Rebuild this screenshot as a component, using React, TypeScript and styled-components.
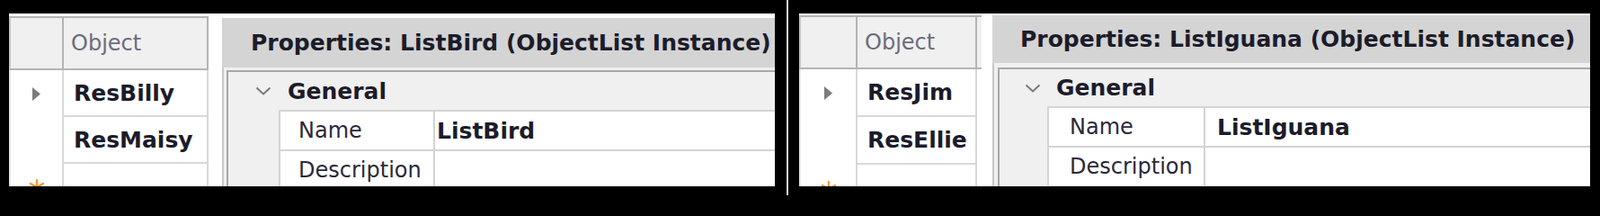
import styled, { createGlobalStyle } from 'styled-components';

const GlobalStyle = createGlobalStyle`
    html, body {
        margin: 0;
        padding: 0;
        background: #000;
    }
    * {
        box-sizing: border-box;
    }
`;

interface ShotData {
    width: number
    gridTop: number
    panelTop: number
    ind: number
    obj: number
    extra: number
    gap: number
    headH: number
    rowH: number
    rows: string[]
    title: string
    titleH: number
    titlePad: number
    bodyPadTop: number
    bodyPadLeft: number
    catH: number
    chevPad: number
    chevGap: number
    gutter: number
    nameCol: number
    namePad: number
    valuePad: number
    propH: number
    value: string
}

const shots: ShotData[] = [
    {
        width: 852, gridTop: 3, panelTop: 5,
        ind: 59, obj: 161, extra: 0, gap: 15,
        headH: 60, rowH: 52, rows: ['ResBilly', 'ResMaisy'],
        title: 'Properties: ListBird (ObjectList Instance)',
        titleH: 55, titlePad: 32, bodyPadTop: 3, bodyPadLeft: 3,
        catH: 42, chevPad: 30, chevGap: 18,
        gutter: 56, nameCol: 172, namePad: 20, valuePad: 2, propH: 44,
        value: 'ListBird',
    },
    {
        width: 880, gridTop: 2, panelTop: 2,
        ind: 63, obj: 133, extra: 5, gap: 12,
        headH: 60, rowH: 53, rows: ['ResJim', 'ResEllie'],
        title: 'Properties: ListIguana (ObjectList Instance)',
        titleH: 53, titlePad: 31, bodyPadTop: 5, bodyPadLeft: 4,
        catH: 41, chevPad: 28, chevGap: 17,
        gutter: 53, nameCol: 174, namePad: 23, valuePad: 13, propH: 44,
        value: 'ListIguana',
    },
];

const RowArrow = () => (
    <svg width="9" height="15" viewBox="0 0 9 15">
        <polygon points="0,0 9,7.5 0,15" fill="#7c7c7c" />
    </svg>
);

const NewRowStar = () => (
    <svg width="18" height="18" viewBox="0 0 18 18">
        <g stroke="#f39a3c" strokeWidth="2.4" strokeLinecap="round">
            <line x1="9" y1="1" x2="9" y2="17" />
            <line x1="2" y1="5" x2="16" y2="13" />
            <line x1="2" y1="13" x2="16" y2="5" />
        </g>
    </svg>
);

const Chevron = () => (
    <svg width="18" height="10" viewBox="0 0 18 10">
        <polyline points="1.5,1.5 9,8.5 16.5,1.5" fill="none" stroke="#7a7a7a" strokeWidth="2" />
    </svg>
);

const ObjectGrid = ({ s }: { s: ShotData }) => (
    <Grid $top={s.gridTop} $gap={s.gap}>
        <HeadRow $cols={`${s.ind}px ${s.obj}px ${s.extra}px`} $h={s.headH}>
            <HeadCell />
            <HeadCell>Object</HeadCell>
            <span />
        </HeadRow>
        {[...s.rows, ''].map((name, i) => (
            <BodyRow key={i} $cols={`${s.ind}px ${s.obj}px`} $h={s.rowH}>
                <IndCell>
                    {i === 0 && <RowArrow />}
                    {i === s.rows.length && <NewRowStar />}
                </IndCell>
                <ItemCell>{name}</ItemCell>
            </BodyRow>
        ))}
    </Grid>
);

const PropertyPanel = ({ s }: { s: ShotData }) => (
    <Panel $top={s.panelTop}>
        <TitleBar $h={s.titleH} $pad={s.titlePad}>{s.title}</TitleBar>
        <PanelBody $padTop={s.bodyPadTop} $padLeft={s.bodyPadLeft}>
            <Frame>
                <Category $h={s.catH} $pad={s.chevPad} $gap={s.chevGap}>
                    <Chevron />
                    <span>General</span>
                </Category>
                {[['Name', s.value], ['Description', '']].map(([label, val]) => (
                    <PropRow key={label} $cols={`${s.gutter}px ${s.nameCol}px 1fr`} $h={s.propH}>
                        <span />
                        <PropName $pad={s.namePad}>{label}</PropName>
                        <PropValue $pad={s.valuePad}>{val}</PropValue>
                    </PropRow>
                ))}
            </Frame>
        </PanelBody>
    </Panel>
);

export default function App() {
    return (
        <>
            <GlobalStyle />
            <Page>
                <Shot $w={shots[0].width}>
                    <ObjectGrid s={shots[0]} />
                    <PropertyPanel s={shots[0]} />
                </Shot>
                <Divider />
                <Shot $w={shots[1].width}>
                    <ObjectGrid s={shots[1]} />
                    <PropertyPanel s={shots[1]} />
                </Shot>
            </Page>
        </>
    );
}

const Page = styled.div`
    display: flex;
    height: 217px;
    width: 1780px;
    padding-left: 10px;
    background: #000;
    font-family: "DejaVu Sans", Verdana, sans-serif;
    color: #1c1c2a;
    overflow: hidden;
`;

const Shot = styled.div<{ $w: number }>`
    width: ${({ $w }) => $w}px;
    flex-shrink: 0;
    margin: 15px 0 10px;
    background: #fff;
    display: flex;
    align-items: flex-start;
    overflow: hidden;
`;

const Divider = styled.div`
    width: 2px;
    margin: 0 12px 0 13px;
    background: #d8d8d8;
`;

const Grid = styled.div<{ $top: number; $gap: number }>`
    margin-top: ${({ $top }) => $top}px;
    margin-right: ${({ $gap }) => $gap}px;
    display: flex;
    flex-direction: column;
    flex-shrink: 0;
`;

const HeadRow = styled.div<{ $cols: string; $h: number }>`
    display: grid;
    grid-template-columns: ${({ $cols }) => $cols};
    height: ${({ $h }) => $h}px;
    background: #f0f0f0;
    border-top: 2px solid #b4b4b4;
    border-bottom: 2px solid #b4b4b4;
    border-left: 2px solid #c4c4c4;
`;

const HeadCell = styled.div`
    border-right: 2px solid #b4b4b4;
    display: flex;
    align-items: center;
    padding-left: 8px;
    font-size: 24px;
    color: #6c6c7a;
`;

const BodyRow = styled.div<{ $cols: string; $h: number }>`
    display: grid;
    grid-template-columns: ${({ $cols }) => $cols};
    height: ${({ $h }) => $h}px;
    border-left: 2px solid #e6e6e6;
`;

const IndCell = styled.div`
    border-right: 2px solid #d8d8d8;
    display: flex;
    align-items: center;
    justify-content: center;
`;

const ItemCell = styled.div`
    border-right: 2px solid #d8d8d8;
    border-bottom: 2px solid #d8d8d8;
    display: flex;
    align-items: center;
    padding-left: 11px;
    font-size: 25px;
    font-weight: bold;
`;

const Panel = styled.div<{ $top: number }>`
    flex: 1;
    min-width: 0;
    align-self: stretch;
    margin-top: ${({ $top }) => $top}px;
    display: flex;
    flex-direction: column;
`;

const TitleBar = styled.div<{ $h: number; $pad: number }>`
    height: ${({ $h }) => $h}px;
    flex-shrink: 0;
    background: #d4d4d4;
    padding-left: ${({ $pad }) => $pad}px;
    display: flex;
    align-items: center;
    font-size: 25px;
    font-weight: bold;
    white-space: nowrap;
    overflow: hidden;
`;

const PanelBody = styled.div<{ $padTop: number; $padLeft: number }>`
    flex: 1;
    background: #f0f0f0;
    border-left: 2px solid #c8c8c8;
    padding: ${({ $padTop, $padLeft }) => `${$padTop}px 0 0 ${$padLeft}px`};
    display: flex;
`;

const Frame = styled.div`
    flex: 1;
    border-top: 2px solid #a8a8a8;
    border-left: 2px solid #a8a8a8;
    background: #f0f0f0;
    display: flex;
    flex-direction: column;
`;

const Category = styled.div<{ $h: number; $pad: number; $gap: number }>`
    height: ${({ $h }) => $h}px;
    flex-shrink: 0;
    display: flex;
    align-items: center;
    gap: ${({ $gap }) => $gap}px;
    padding-left: ${({ $pad }) => $pad}px;
    font-size: 25px;
    font-weight: bold;
`;

const PropRow = styled.div<{ $cols: string; $h: number }>`
    display: grid;
    grid-template-columns: ${({ $cols }) => $cols};
    height: ${({ $h }) => $h}px;
    flex-shrink: 0;
`;

const PropName = styled.div<{ $pad: number }>`
    background: #fff;
    border-left: 2px solid #d4d4d4;
    border-top: 2px solid #d4d4d4;
    display: flex;
    align-items: center;
    padding-left: ${({ $pad }) => $pad}px;
    font-size: 24px;
    color: #2a2a3a;
    white-space: nowrap;
`;

const PropValue = styled.div<{ $pad: number }>`
    background: #fff;
    border-left: 2px solid #d4d4d4;
    border-top: 2px solid #d4d4d4;
    display: flex;
    align-items: center;
    padding-left: ${({ $pad }) => $pad}px;
    font-size: 25px;
    font-weight: bold;
    white-space: nowrap;
`;
